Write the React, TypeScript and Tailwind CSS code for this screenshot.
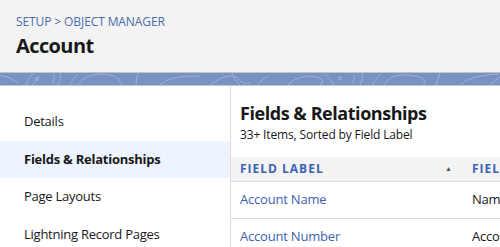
import React from "react";

function Band() {
  return (
    <div className="h-[14px] w-full bg-[#7893c3] border-t border-b border-[#c4c4c4] overflow-hidden">
      <svg width="500" height="12" viewBox="0 0 500 12" className="block">
        <g fill="none" stroke="#a9bde0" strokeWidth="0.8" opacity="0.9">
          <path d="M0 2 Q10 4 18 10" />
          <path d="M26 12 Q28 4 34 0" />
          <path d="M33 12 Q36 6 40 2" />
          <circle cx="37" cy="6" r="1.5" />
          <path d="M52 11 Q56 6 54 2" />
          <path d="M58 12 Q62 5 60 0" />
          <path d="M70 12 Q72 6 78 1" />
          <path d="M78 12 Q84 2 100 1 Q118 0 122 12" />
          <path d="M136 12 Q136 6 138 0" />
          <path d="M160 12 Q170 2 200 3" />
          <path d="M210 12 Q232 -4 240 8 Q244 12 250 10" />
          <path d="M232 0 Q234 8 240 12" />
          <path d="M258 12 Q262 6 268 3" />
          <path d="M288 12 Q300 0 318 4 Q326 8 320 12" />
          <path d="M325 0 Q330 6 334 12" />
          <circle cx="340" cy="5" r="1.5" />
          <path d="M352 11 Q356 6 354 2" />
          <path d="M360 12 Q364 5 362 0" />
          <path d="M372 12 Q376 6 380 1" />
          <path d="M384 12 Q390 0 410 2 Q428 4 424 12" />
          <path d="M436 12 Q438 6 440 0" />
          <path d="M460 12 Q470 2 498 1" />
          <path d="M490 12 Q496 6 500 4" />
        </g>
      </svg>
    </div>
  );
}

const navItems = [
  "Details",
  "Fields & Relationships",
  "Page Layouts",
  "Lightning Record Pages",
];

export default function App() {
  return (
    <div
      className="w-[500px] h-[247px] overflow-hidden bg-white text-[#181818]"
      style={{ fontFamily: '"Open Sans", "Noto Sans", sans-serif' }}
    >
      <div className="h-[72px] bg-[#f3f3f3] pl-4 pt-[14px]">
        <div className="text-[12px] leading-[16px] text-[#4a6da8] tracking-[-0.1px]">
          SETUP &gt; OBJECT MANAGER
        </div>
        <div className="mt-[3px] text-[20px] leading-[26px] font-bold tracking-[-0.6px]">
          Account
        </div>
      </div>
      <Band />
      <div className="flex">
        <div className="w-[231px] shrink-0 border-r border-[#dddbda] pt-[17px]">
          {navItems.map((n, i) => (
            <div
              key={n}
              className={
                "h-[37.5px] flex items-center pl-6 text-[13px] tracking-[-0.25px] " +
                (i === 1 ? "bg-[#eef4ff] font-bold" : "")
              }
            >
              {n}
            </div>
          ))}
        </div>
        <div className="flex-1 min-w-0 overflow-hidden">
          <div className="pl-[9px] pt-[15px] h-[71px]">
            <div className="text-[18px] leading-[24px] font-bold tracking-[-0.45px]">
              Fields &amp; Relationships
            </div>
            <div className="mt-[2px] text-[12px] leading-[16px] tracking-[-0.15px]">
              33+ Items, Sorted by Field Label
            </div>
          </div>
          <div className="h-[25px] bg-[#f3f3f3] border-b border-[#dddbda] flex items-center whitespace-nowrap">
            <div className="w-[241px] shrink-0 flex items-center pl-[9px] pr-[20px]">
              <span className="text-[12px] font-bold tracking-[1px] text-[#3b62b5]">
                FIELD LABEL
              </span>
              <span className="ml-auto text-[7px] text-[#555]">▲</span>
            </div>
            <span className="text-[12px] font-bold tracking-[1px] text-[#3b62b5]">
              FIELD NAME
            </span>
          </div>
          {[
            ["Account Name", "Name"],
            ["Account Number", "AccountNumber"],
          ].map(([a, b]) => (
            <div
              key={a}
              className="h-[37px] border-b border-[#dddbda] flex items-center whitespace-nowrap text-[13px] tracking-[-0.2px]"
            >
              <div className="w-[241px] shrink-0 pl-[9px] text-[#3a5fb0]">{a}</div>
              <div>{b}</div>
            </div>
          ))}
        </div>
      </div>
    </div>
  );
}
